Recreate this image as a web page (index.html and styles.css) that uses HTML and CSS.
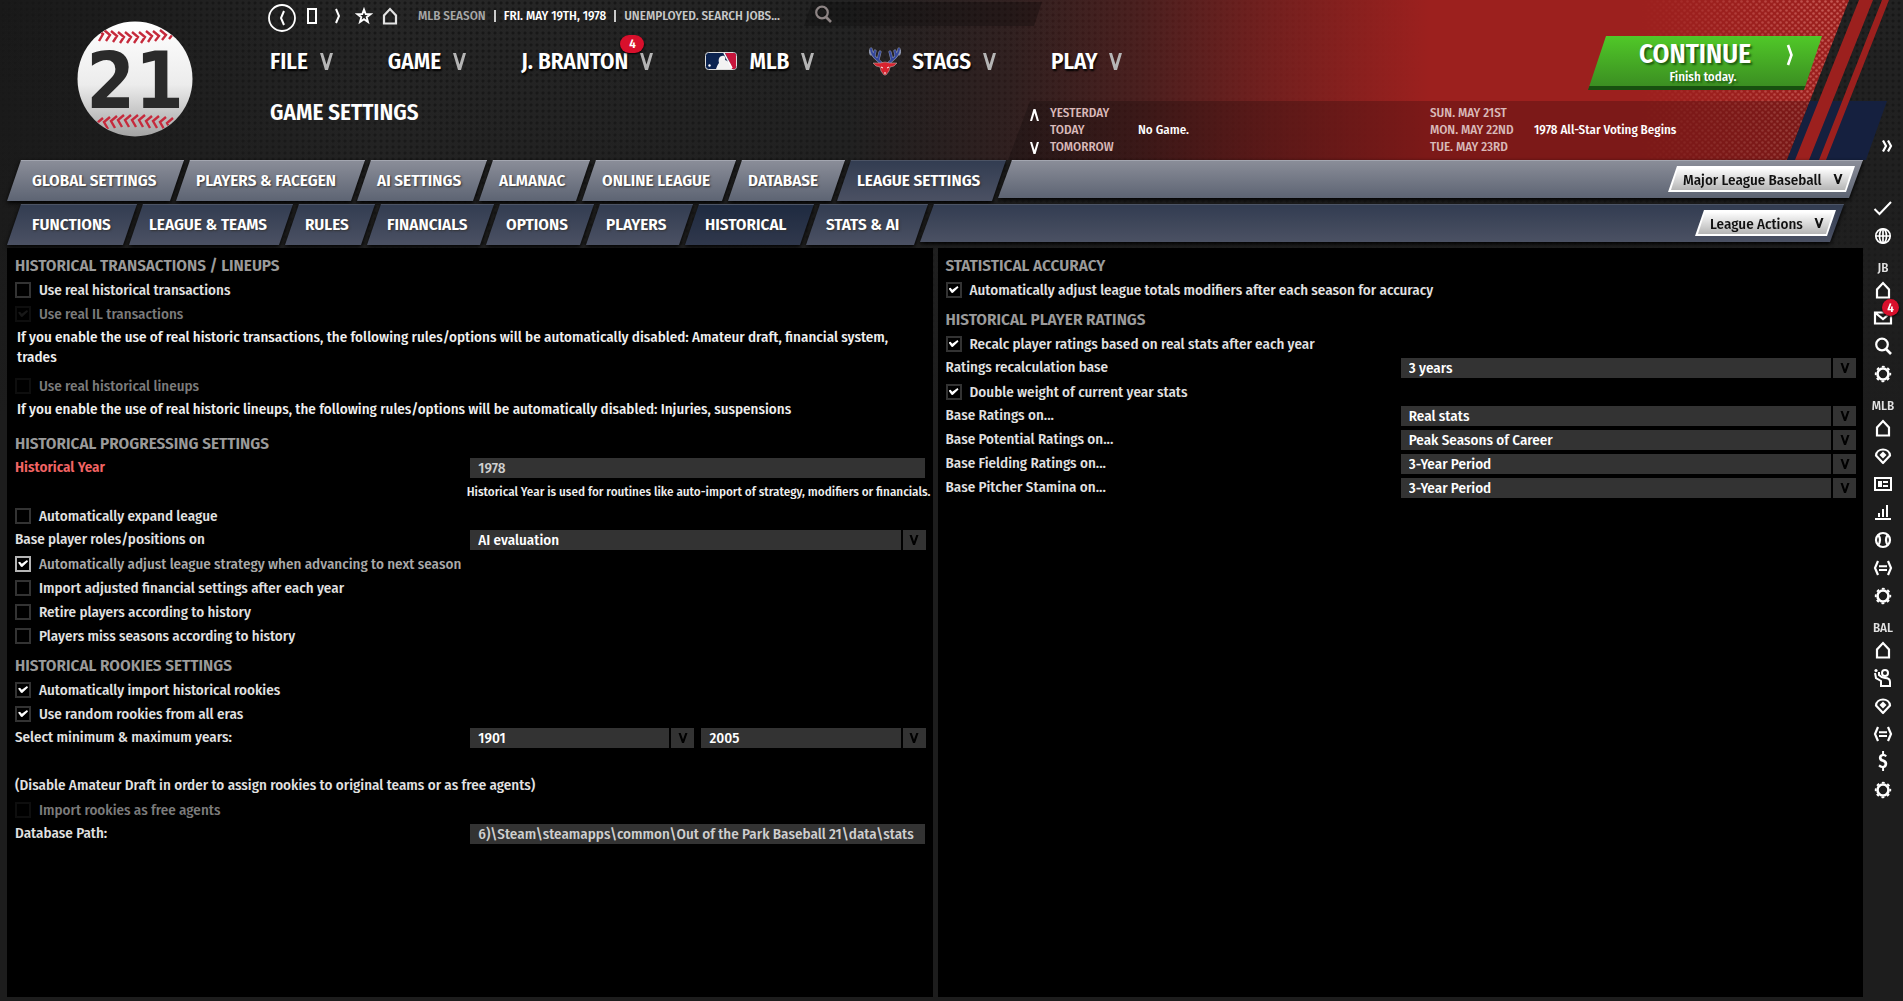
FILE: index.html
```html
<!DOCTYPE html>
<html>
	<head>
		<meta charset="UTF-8">
		<title>Game Settings</title>
		<link rel="stylesheet" href="styles.css">
	</head>
	<body>
		<!-- shared icons -->
		<svg class="defs" width="0" height="0">
			<symbol id="vee" viewBox="0 0 13 17"><path d="M0 0h3l3.500 11.500L10 0h3L8 17H5z" fill="currentColor"/></symbol>
			<symbol id="vee-small" viewBox="0 0 10 10"><path d="M.500 0h2.200L5 6.500L7.300 0h2.200L6 10H4z" fill="currentColor"/></symbol>
			<symbol id="home" viewBox="0 0 20 20"><path d="M4 17.500V9.500L10 3l6 6.500v8z" fill="none" stroke="currentColor" stroke-width="2.200"/></symbol>
			<symbol id="find" viewBox="0 0 20 20"><circle cx="9" cy="8.500" r="5.800" fill="none" stroke="currentColor" stroke-width="2.200"/><path d="M13 13l5 5" stroke="currentColor" stroke-width="2.600"/></symbol>
			<symbol id="gear" viewBox="0 0 20 20"><circle cx="10" cy="10" r="5.500" fill="none" stroke="currentColor" stroke-width="2.600"/><circle cx="10" cy="10" r="7.300" fill="none" stroke="currentColor" stroke-width="1.800" stroke-dasharray="2.870 2.870" stroke-dashoffset="1.430"/></symbol>
			<symbol id="field" viewBox="0 0 20 20"><path d="M10 17L3 9.500C3.500 1.500 16.500 1.500 17 9.500z" fill="none" stroke="currentColor" stroke-width="2.200" stroke-linejoin="round"/><path d="M10 5.500L13.500 9L10 12.500L6.500 9z" fill="currentColor"/></symbol>
			<symbol id="trade" viewBox="0 0 20 20"><path d="M5 3L2 10l3 7M15 3l3 7-3 7" fill="none" stroke="currentColor" stroke-width="2.200"/><path d="M6 8.200h8M6 12h8" stroke="currentColor" stroke-width="2"/></symbol>
		</svg>

		<div class="app">
			<!-- header artwork: red fade, halftone, slanted stripes -->
			<svg class="art" width="1053" height="160" viewBox="850 0 1053 160">
				<defs>
					<linearGradient id="red" x1="850" x2="1430" gradientUnits="userSpaceOnUse">
						<stop offset="0" stop-color="#9c201e" stop-opacity="0"/>
						<stop offset=".28" stop-color="#9c201e" stop-opacity=".13"/>
						<stop offset=".5" stop-color="#9c201e" stop-opacity=".34"/>
						<stop offset=".72" stop-color="#9c201e" stop-opacity=".66"/>
						<stop offset="1" stop-color="#9c201e"/>
					</linearGradient>
					<linearGradient id="haze" x1="1640" x2="1830" gradientUnits="userSpaceOnUse">
						<stop offset="0" stop-color="#fff" stop-opacity="0"/>
						<stop offset="1" stop-color="#fff"/>
					</linearGradient>
					<pattern id="dots" width="6" height="6" patternUnits="userSpaceOnUse">
						<circle cx="1.500" cy="1.500" r="1.300" fill="#e08078"/>
						<circle cx="4.500" cy="4.500" r="1.300" fill="#e08078"/>
					</pattern>
					<mask id="fade"><rect x="1600" width="303" height="160" fill="url(#haze)"/></mask>
				</defs>
				<path d="M850 0H1849L1787 160H850z" fill="url(#red)"/>
				<path d="M1600 0H1849L1787 160H1600z" fill="url(#dots)" mask="url(#fade)" opacity=".6"/>
				<path d="M1030 101H1810L1787 160H1008z" fill="#000" opacity=".2"/>
				<path d="M1810 101H1887L1866 160H1787z" fill="#15203f"/>
				<path d="M1859 0H1873L1809 160H1795zM1882 0H1889L1826 160H1819z" fill="#9c201e"/>
			</svg>

			<div class="main">
				<header class="header">
					<svg class="ball" width="116" height="116" viewBox="0 0 116 116">
						<defs>
							<linearGradient id="leather" x2="0" y2="1"><stop offset="0" stop-color="#fff"/><stop offset=".55" stop-color="#ececec"/><stop offset="1" stop-color="#a4a4a4"/></linearGradient>
							<clipPath id="round"><circle cx="58" cy="58" r="57"/></clipPath>
						</defs>
						<circle cx="58" cy="58" r="57.500" fill="url(#leather)"/>
						<g clip-path="url(#round)" fill="none" stroke="#c62a3c" stroke-width="2.400">
							<path d="M20 8l6 5-4 7M27 9l6 5-4 6M34 10l6 5-4 6M41 11l6 5-4 6M48 11l6 5-4 6M55 11l6 5-4 6M62 11l6 5-4 6M69 10l6 5-4 6M76 10l6 5-4 5M83 9l6 5-4 5M90 8l6 5-4 5"/>
							<path d="M26 97l-6 5 4 6M33 96l-6 5 4 7M40 95l-6 5 4 7M47 94l-6 5 4 7M54 94l-6 5 4 7M61 94l-6 5 4 7M68 94l-6 5 4 7M75 95l-6 5 4 7M82 95l-6 5 4 7M89 96l-6 5 4 7M96 97l-6 5 4 7"/>
						</g>
						<text x="58" y="87" text-anchor="middle" class="ball-num">21</text>
					</svg>

					<div class="head">
						<div class="toolbar">
							<button class="tool back" aria-label="Back"><svg width="28" height="28" viewBox="0 0 28 28"><circle cx="14" cy="14" r="13" fill="none" stroke="#fff" stroke-width="1.800"/><path d="M16 7l-3 7 3 7" fill="none" stroke="#fff" stroke-width="2"/></svg></button>
							<button class="tool" aria-label="Page"><svg width="12" height="18" viewBox="0 0 12 18"><path d="M2 2h8v14H2z" fill="none" stroke="#fff" stroke-width="2"/></svg></button>
							<button class="tool" aria-label="Forward"><svg width="8" height="18" viewBox="0 0 8 18"><path d="M2 2l3 7-3 7" fill="none" stroke="#fff" stroke-width="2"/></svg></button>
							<button class="tool" aria-label="Favorites"><svg width="18" height="18" viewBox="0 0 18 18"><path d="M9 2.500l1.700 4.500 4.800.2-3.800 3 1.300 4.800L9 12.200 5 15l1.300-4.800-3.800-3 4.800-.2z" fill="none" stroke="#fff" stroke-width="1.900"/></svg></button>
							<button class="tool" aria-label="Home"><svg width="20" height="20"><use href="#home"/></svg></button>
							<span class="crumbs"><span class="dim">MLB SEASON</span><i></i><span>FRI. MAY 19TH, 1978</span><i></i><a class="soft" href="#jobs">UNEMPLOYED. SEARCH JOBS...</a></span>
							<label class="search"><svg width="20" height="20"><use href="#find"/></svg><input type="search" aria-label="Search"></label>
						</div>

						<div class="menu-row">
							<nav class="menu">
								<button>FILE<svg><use href="#vee"/></svg></button>
								<button>GAME<svg><use href="#vee"/></svg></button>
								<button>J. BRANTON<b class="badge">4</b><svg><use href="#vee"/></svg></button>
								<button>
									<svg class="mlb" viewBox="0 0 32 18"><rect x=".5" y=".5" width="31" height="17" rx="3" fill="#0b2350" stroke="#ddd"/><path d="M20 1h9q2 0 2 2v12q0 2-2 2h-2q-2-8-7-16z" fill="#c8163c"/><path d="M11 17c1-3 2-5 3-6-1-3 0-7 3-7 3-1 4 2 3 4 4 1 6 4 7 9z" fill="#f2f2f2"/><circle cx="4.500" cy="13.500" r="1.200" fill="#fff"/><path d="M19 1l8 15" stroke="#fff" stroke-width="1.500"/></svg>
									MLB<svg><use href="#vee"/></svg></button>
								<button>
									<svg class="stag" viewBox="0 0 32 30"><g fill="none" stroke="#8d94aa" stroke-width="3" stroke-linecap="round"><path d="M12 17C9 13 3 12 2 3M5 10L6 5M9 14L11 6M2 8L1 5M20 17c3-4 9-5 10-14M27 10l-1-5M23 14L21 6M30 8l1-3"/></g><g fill="none" stroke="#34479c" stroke-width="2" stroke-linecap="round"><path d="M12 17C9 13 3 12 2 3M5 10L6 5M9 14L11 6M20 17c3-4 9-5 10-14M27 10l-1-5M23 14L21 6"/></g><path d="M4 17l7 0 5-1 5 1 7 0-3 3-4 1-1 4-3 4h-2l-3-4-1-4-4-1z" fill="#d8232f" stroke="#b9a7a7" stroke-width=".6"/><path d="M12 21l2 1M20 21l-2 1M15 27h2" stroke="#fff"/></svg>
									STAGS<svg><use href="#vee"/></svg></button>
								<button>PLAY<svg><use href="#vee"/></svg></button>
							</nav>
							<button class="continue">
								<span class="face"><strong>CONTINUE</strong><small>Finish today.</small></span>
								<svg width="8" height="22" viewBox="0 0 8 22"><path d="M2 1l3.500 10L2 21" fill="none" stroke="#fff" stroke-width="2.600"/></svg>
							</button>
						</div>

						<div class="title-row">
							<h1>GAME SETTINGS</h1>
							<div class="schedule">
								<div class="arrows">
									<button aria-label="Earlier"><svg class="up"><use href="#vee"/></svg></button>
									<button aria-label="Later"><svg><use href="#vee"/></svg></button>
								</div>
								<ul class="days"><li>YESTERDAY</li><li>TODAY</li><li>TOMORROW</li></ul>
								<span class="event">No Game.</span>
								<ul class="days"><li>SUN. MAY 21ST</li><li>MON. MAY 22ND</li><li>TUE. MAY 23RD</li></ul>
								<span class="event">1978 All-Star Voting Begins</span>
							</div>
						</div>
					</div>
				</header>

				<div class="bar bar-main">
					<nav class="tabs">
						<a href="#global">GLOBAL SETTINGS</a>
						<a href="#facegen">PLAYERS &amp; FACEGEN</a>
						<a href="#ai">AI SETTINGS</a>
						<a href="#almanac">ALMANAC</a>
						<a href="#online">ONLINE LEAGUE</a>
						<a href="#database">DATABASE</a>
						<a href="#league" class="on">LEAGUE SETTINGS</a>
					</nav>
					<div class="rest">
						<label class="pill"><select aria-label="League"><option>Major League Baseball</option></select><svg><use href="#vee-small"/></svg></label>
					</div>
				</div>
				<div class="bar bar-sub">
					<nav class="tabs">
						<a href="#functions">FUNCTIONS</a>
						<a href="#teams">LEAGUE &amp; TEAMS</a>
						<a href="#rules">RULES</a>
						<a href="#financials">FINANCIALS</a>
						<a href="#options">OPTIONS</a>
						<a href="#players">PLAYERS</a>
						<a href="#historical" class="on">HISTORICAL</a>
						<a href="#stats">STATS &amp; AI</a>
					</nav>
					<div class="rest">
						<label class="pill"><select aria-label="Actions"><option>League Actions</option></select><svg><use href="#vee-small"/></svg></label>
					</div>
				</div>

				<form class="panels">
					<section class="panel">
						<h2>HISTORICAL TRANSACTIONS / LINEUPS</h2>
						<label class="check"><input type="checkbox">Use real historical transactions</label>
						<label class="check"><input type="checkbox" checked disabled>Use real IL transactions</label>
						<p class="note">If you enable the use of real historic transactions, the following rules/options will be automatically disabled: Amateur draft, financial system, trades</p>
						<label class="check"><input type="checkbox" disabled>Use real historical lineups</label>
						<p class="note">If you enable the use of real historic lineups, the following rules/options will be automatically disabled: Injuries, suspensions</p>

						<h2>HISTORICAL PROGRESSING SETTINGS</h2>
						<div class="row"><label class="alert" for="year">Historical Year</label><input type="text" id="year" value="1978"></div>
						<p class="hint">Historical Year is used for routines like auto-import of strategy, modifiers or financials.</p>
						<label class="check"><input type="checkbox">Automatically expand league</label>
						<div class="row"><label for="roles">Base player roles/positions on</label><div class="pick"><select id="roles"><option>AI evaluation</option></select><svg><use href="#vee-small"/></svg></div></div>
						<label class="check hover"><input type="checkbox" checked>Automatically adjust league strategy when advancing to next season</label>
						<label class="check"><input type="checkbox">Import adjusted financial settings after each year</label>
						<label class="check"><input type="checkbox">Retire players according to history</label>
						<label class="check"><input type="checkbox">Players miss seasons according to history</label>

						<h2>HISTORICAL ROOKIES SETTINGS</h2>
						<label class="check"><input type="checkbox" checked>Automatically import historical rookies</label>
						<label class="check"><input type="checkbox" checked>Use random rookies from all eras</label>
						<div class="row">
							<label for="min">Select minimum &amp; maximum years:</label>
							<div class="pair">
								<div class="pick"><select id="min"><option>1901</option></select><svg><use href="#vee-small"/></svg></div>
								<div class="pick"><select aria-label="Maximum year"><option>2005</option></select><svg><use href="#vee-small"/></svg></div>
							</div>
						</div>
						<p class="aside">(Disable Amateur Draft in order to assign rookies to original teams or as free agents)</p>
						<label class="check"><input type="checkbox" disabled>Import rookies as free agents</label>
						<div class="row"><label for="path">Database Path:</label><input type="text" id="path" value="6)\Steam\steamapps\common\Out of the Park Baseball 21\data\stats"></div>
					</section>

					<section class="panel">
						<h2>STATISTICAL ACCURACY</h2>
						<label class="check"><input type="checkbox" checked>Automatically adjust league totals modifiers after each season for accuracy</label>

						<h2>HISTORICAL PLAYER RATINGS</h2>
						<label class="check"><input type="checkbox" checked>Recalc player ratings based on real stats after each year</label>
						<div class="row"><label for="recalc">Ratings recalculation base</label><div class="pick"><select id="recalc"><option>3 years</option></select><svg><use href="#vee-small"/></svg></div></div>
						<label class="check"><input type="checkbox" checked>Double weight of current year stats</label>
						<div class="row"><label for="base">Base Ratings on...</label><div class="pick"><select id="base"><option>Real stats</option></select><svg><use href="#vee-small"/></svg></div></div>
						<div class="row"><label for="potential">Base Potential Ratings on...</label><div class="pick"><select id="potential"><option>Peak Seasons of Career</option></select><svg><use href="#vee-small"/></svg></div></div>
						<div class="row"><label for="fielding">Base Fielding Ratings on...</label><div class="pick"><select id="fielding"><option>3-Year Period</option></select><svg><use href="#vee-small"/></svg></div></div>
						<div class="row"><label for="stamina">Base Pitcher Stamina on...</label><div class="pick"><select id="stamina"><option>3-Year Period</option></select><svg><use href="#vee-small"/></svg></div></div>
					</section>
				</form>
			</div>

			<aside class="side">
				<button class="expand" aria-label="Expand"><svg width="12" height="14" viewBox="0 0 12 14"><path d="M2 1.500l3 5.500-3 5.500M7 1.500l3 5.500-3 5.500" fill="none" stroke="#fff" stroke-width="2.200"/></svg></button>
				<button aria-label="Done"><svg viewBox="0 0 20 20"><path d="M1.500 11l5 5L18 4" fill="none" stroke="#fff" stroke-width="2"/></svg></button>
				<button aria-label="World"><svg viewBox="0 0 20 20"><g fill="none" stroke="#fff" stroke-width="1.700"><circle cx="10" cy="10" r="7.200"/><ellipse cx="10" cy="10" rx="3.500" ry="7.200"/><path d="M3 10h14M10 3v14"/></g></svg></button>
				<h3>JB</h3>
				<button aria-label="Manager home"><svg><use href="#home"/></svg></button>
				<button class="mail" aria-label="Mail"><svg viewBox="0 0 20 20"><path d="M2 4.500h16v11H2zM2.500 5l7.500 6 7.500-6" fill="none" stroke="#fff" stroke-width="2.200"/></svg><b class="badge">4</b></button>
				<button aria-label="Find"><svg><use href="#find"/></svg></button>
				<button aria-label="Manager options"><svg><use href="#gear"/></svg></button>
				<h3>MLB</h3>
				<button aria-label="League home"><svg><use href="#home"/></svg></button>
				<button aria-label="Scores"><svg><use href="#field"/></svg></button>
				<button aria-label="Standings"><svg viewBox="0 0 20 20"><path d="M2 4h16v12H2z" fill="none" stroke="#fff" stroke-width="2"/><path d="M5 7h4v6H5zM10 7h5v2h-5zM10 11h5v2h-5z" fill="#fff"/></svg></button>
				<button aria-label="Statistics"><svg viewBox="0 0 20 20"><path d="M2 16h16v2H2zM5 11h2v4H5zM9 7h2v8H9zM13 3h2v12h-2z" fill="#fff"/></svg></button>
				<button aria-label="Players"><svg viewBox="0 0 20 20"><g fill="none" stroke="#fff"><circle cx="10" cy="10" r="7" stroke-width="2.200"/><path d="M5 4.500q4 5.500 0 11M15 4.500q-4 5.500 0 11" stroke-width="2.200"/></g></svg></button>
				<button aria-label="League transactions"><svg><use href="#trade"/></svg></button>
				<button aria-label="League options"><svg><use href="#gear"/></svg></button>
				<h3>BAL</h3>
				<button aria-label="Team home"><svg><use href="#home"/></svg></button>
				<button aria-label="Roster"><svg viewBox="0 0 20 20"><circle cx="12" cy="5" r="3" fill="none" stroke="#fff" stroke-width="2"/><circle cx="3" cy="2.500" r="1.600" fill="#fff"/><path d="M2 5l1 5 5 3v5h9v-4q0-4-5-4-3 0-6-3V4" fill="none" stroke="#fff" stroke-width="2"/></svg></button>
				<button aria-label="Lineups"><svg><use href="#field"/></svg></button>
				<button aria-label="Team transactions"><svg><use href="#trade"/></svg></button>
				<button class="money" aria-label="Finances">$</button>
				<button aria-label="Team options"><svg><use href="#gear"/></svg></button>
			</aside>
		</div>
	</body>
</html>
```
FILE: styles.css
```css
*{ box-sizing: border-box;}
body{ margin: 0; background: #1a1a1a; color: #e2e2e2; font: 500 15px/24px "Fira Sans Condensed","Roboto",sans-serif;}
h1,h2,h3,p,ul{ margin: 0; padding: 0; list-style: none;}
a{ color: inherit; text-decoration: none;}
button,input,select{ margin: 0; padding: 0; border: 0; background: none; color: inherit; font: inherit;}
button,select{ cursor: pointer;}
svg{ display: block; flex: none;}
.defs{ position: absolute;}

.app{ position: relative; display: flex; min-height: 100vh; overflow: hidden; background: linear-gradient(rgba(30,30,30,0),#1d1d1d 420px),radial-gradient(circle,#171717 1px,transparent 2px) 0 0/6px 6px,linear-gradient(90deg,#191919,#262626 20%,#212121 60%,#222);}
.art{ position: absolute; top: 0; right: 0;}
.main{ position: relative; flex: 1; min-width: 0; display: flex; flex-direction: column;}

/* header */
.header{ display: flex; min-height: 160px;}
.ball{ margin: 21px 76px 0 77px;}
.ball-num{ font: bold 78px "DejaVu Sans Condensed","DejaVu Sans",sans-serif; fill: #2a2a2a;}
.head{ flex: 1; min-width: 0; display: flex; flex-direction: column; padding-left: 1px;}
.toolbar{ display: flex; align-items: center; height: 32px; font-size: 13px; white-space: nowrap;}
.tool{ display: grid; place-items: center; width: 26px; height: 32px;}
.tool.back{ width: 28px; margin: 4px 3px 0 -2px;}
.crumbs{ display: flex; align-items: center; min-width: 370px; margin-left: 15px; color: #fff;}
.crumbs i{ width: 2px; height: 12px; margin: 0 8px; background: #ccc;}
.dim{ color: #a8a8a8;}
.soft{ color: #c8c8c8;}
.search{ display: flex; align-items: center; width: 238px; height: 24px; margin: 0 0 4px 16px; padding-left: 9px; color: #8d8484; background: rgba(0,0,0,.25); clip-path: polygon(8px 0,100% 0,calc(100% - 8px) 100%,0 100%);}
.search input{ width: 180px; outline: 0;}
.menu-row{ display: flex; align-items: flex-start; justify-content: space-between; height: 69px; padding: 4px 41px 0 0;}
.menu{ display: flex; gap: 55px; padding-top: 9px;}
.menu button{ position: relative; display: flex; align-items: center; height: 32px; color: #fff; font-size: 23px; font-weight: 600; white-space: nowrap; text-shadow: 1px 2px 2px #000;}
.menu svg{ width: 13px; height: 17px; margin-left: 12px; color: #b5b5b5;}
.menu .mlb{ width: 32px; height: 18px; margin: 0 12px 0 -3px;}
.menu .stag{ width: 32px; height: 30px; margin: 0 11px 0 0;}
.badge{ position: absolute; display: block; width: 24px; height: 18px; border-radius: 9px; background: #d8102c; color: #fff; font-size: 13px; font-weight: 600; line-height: 18px; text-align: center; text-shadow: none; box-shadow: 0 1px 2px #000;}
.menu .badge{ top: -10px; right: 9px;}
.continue{ position: relative; display: flex; align-items: center; width: 234px; height: 54px; padding: 0 28px 4px 16px; color: #fff; background: linear-gradient(#50c828,#3c8f22 92%,#17500f 92%); clip-path: polygon(18px 0,100% 0,calc(100% - 18px) 100%,0 100%);}
.face{ flex: 1; display: flex; flex-direction: column; text-shadow: 2px 2px 2px #1f5d10;}
.face strong{ font-size: 27px; font-weight: 600; line-height: 32px;}
.face small{ padding-left: 16px; font-size: 13px; line-height: 14px;}
.continue svg{ margin-bottom: 12px;}
.title-row{ display: flex; justify-content: space-between; min-height: 59px;}
h1{ font-size: 23px; font-weight: 600; line-height: 23px; color: #fff;}
.schedule{ display: grid; grid-template-columns: 24px 88px 292px 104px auto; width: 837px; padding-top: 3px; font-size: 13px; line-height: 17px; white-space: nowrap;}
.days{ color: #d9b9b9;}
.event{ padding-top: 17px; color: #fff;}
.arrows{ display: flex; flex-direction: column; justify-content: space-between; height: 50px; padding-top: 5px;}
.arrows svg{ width: 9px; height: 12px; margin-left: 4px; color: #fff;}
.up{ transform: scaleY(-1);}

/* tab bars */
.bar{ display: flex; height: 38px; margin-left: 7px; filter: drop-shadow(0 2px 2px #000);}
.bar-sub{ margin: 6px 19px 6px 7px;}
.tabs{ display: grid;}
.bar-main .tabs{ grid-template-columns: 169px 181px 122px 103px 146px 109px 161px;}
.bar-sub .tabs{ grid-template-columns: 122px 156px 82px 119px 100px 99px 121px 114px;}
.tabs a,.rest{ clip-path: polygon(14px 0,100% 0,calc(100% - 14px) 100%,0 100%); background: linear-gradient(#8b8e99,#5d6473); box-shadow: inset 0 1px #a3a6b0;}
.tabs a{ margin-right: -8px; padding-left: 20px; color: #fff; font-size: 17px; font-weight: 600; line-height: 41px; white-space: nowrap; text-shadow: 1px 1px 2px #333;}
.tabs a:first-child{ padding-left: 25px;}
.rest{ flex: 1; display: flex; align-items: center; justify-content: flex-end; padding-right: 8px;}
.bar-sub a,.bar-sub .rest,.bar-main .on{ background: linear-gradient(#323c51,#4b5163); box-shadow: inset 0 1px #4c5465;}
.bar-sub .on{ background: linear-gradient(#1e2a40,#30384c);}
.pill{ display: grid; height: 26px; color: #111; background: #fff; clip-path: polygon(9px 0,100% 0,calc(100% - 9px) 100%,0 100%);}
.pill select{ grid-area: 1/1; appearance: none; height: 22px; margin: 2px 3px; padding: 0 30px 0 12px; color: #111; background: linear-gradient(#fff,#b5b5b5); clip-path: polygon(7px 0,100% 0,calc(100% - 7px) 100%,0 100%);}
.pill svg{ position: relative; grid-area: 1/1; place-self: center end; width: 10px; height: 10px; margin-right: 12px; pointer-events: none;}

/* settings */
.panels{ flex: 1; display: grid; grid-template-columns: 1fr 1fr; gap: 5px; margin: 0 0 4px 7px;}
.panel{ padding: 0 7px 0 8px; background: #000;}
h2{ padding-top: 6px; color: #9a9a9a; font-size: 17px; font-weight: 600; line-height: 24px;}
.check{ display: flex; align-items: center; height: 24px;}
.check input{ appearance: none; width: 16px; height: 16px; margin-right: 8px; border: 2px solid #333;}
.check input:checked::before{ content: ''; display: block; width: 10px; height: 7px; margin: 2px 1px; background: #fff; clip-path: polygon(0 35%,20% 25%,38% 55%,90% 0,100% 20%,42% 100%,30% 95%);}
.check input:disabled{ border-color: #0e0e0e;}
.check input:disabled::before{ background: #181818;}
.check:has(:disabled){ color: #7b7b7b;}
.hover{ color: #a9a9a9;}
.hover input{ border-color: #b5b5b5;}
.note{ padding: 1px 0 7px 2px; line-height: 20px; color: #efefef;}
.row{ display: grid; grid-template-columns: 1fr 1fr; line-height: 22px; height: 24px;}
.alert{ color: #f26464; font-weight: 600;}
input[type=text]{ height: 20px; margin: 2px 1px 2px 0; padding: 0 4px 0 8px; background: #333; color: #cfcfcf; min-width: 0;}
.pick{ display: grid; grid-template: 20px/1fr 23px; height: 20px; margin: 2px 0; min-width: 0;}
.pick select{ grid-area: 1/1/2/3; appearance: none; height: 20px; padding-left: 8px; color: #fff; line-height: 20px; background: linear-gradient(#000,#000) right 23px top/2px 100% no-repeat #333;}
.pick svg{ grid-area: 1/2; place-self: center; width: 10px; height: 10px; color: #000; pointer-events: none;}
.pair{ display: grid; grid-template-columns: 1fr 1fr; gap: 7px;}
.hint{ margin-right: -5px; font-size: 13px; text-align: right; white-space: nowrap; color: #efefef;}
.aside{ padding-top: 24px; line-height: 22px; margin-bottom: 2px;}

/* shortcuts */
.side{ position: relative; display: flex; flex-direction: column; align-items: center; width: 40px; padding-top: 132px;}
.side button{ position: relative; display: grid; place-items: center; width: 100%; height: 28px; color: #fff;}
.side button svg{ width: 20px; height: 20px;}
.side .expand{ margin-bottom: 34px; padding-left: 8px;}
.side .expand svg{ width: 12px; height: 14px;}
.side h3{ height: 26px; padding-top: 10px; font-size: 13px; font-weight: 500; line-height: 16px;}
.side .badge{ top: -5px; right: 4px; width: 17px; height: 17px; line-height: 17px;}
.side .money{ font-size: 19px; font-weight: 600;}
```
